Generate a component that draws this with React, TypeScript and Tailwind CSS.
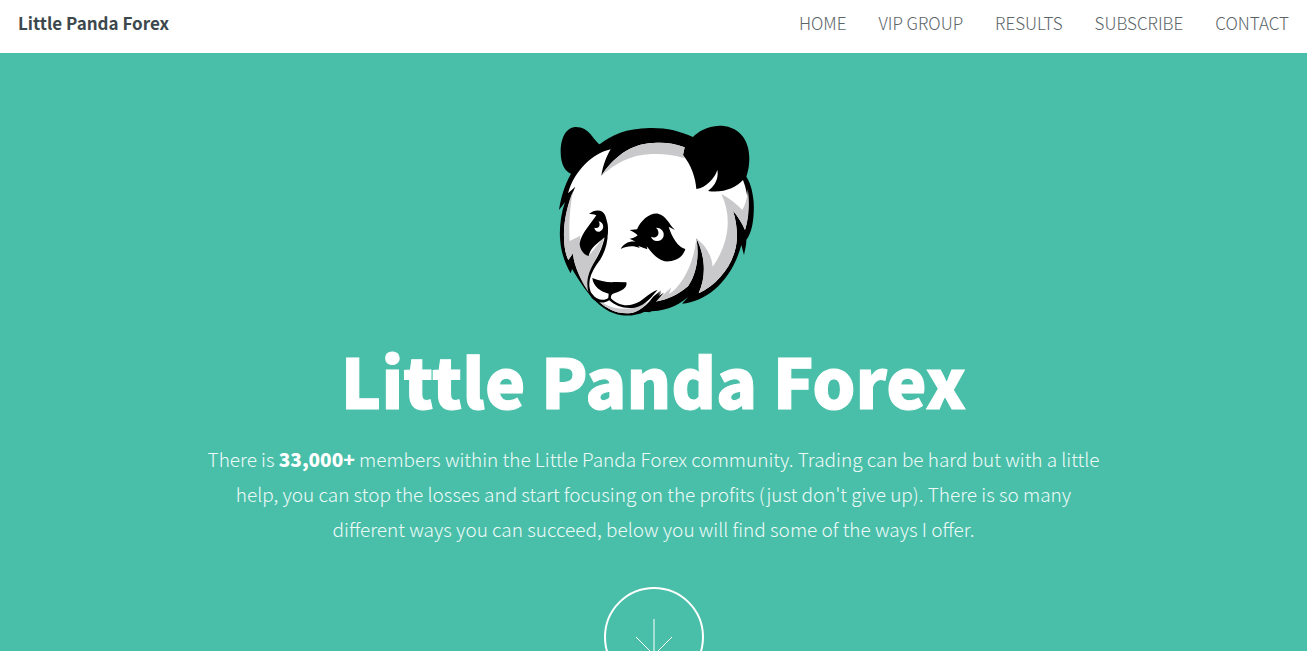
const navLinks = [
  { label: 'HOME', href: '#home' },
  { label: 'VIP GROUP', href: '#vip' },
  { label: 'RESULTS', href: '#results' },
  { label: 'SUBSCRIBE', href: '#subscribe' },
  { label: 'CONTACT', href: '#contact' },
];

function PandaLogo() {
  return (
    <svg viewBox="10 30 606 576" className="w-[202px] h-48 shrink-0" role="img" aria-label="Panda">
      {/* Head silhouette with ears */}
      <path
        fill="#000"
        d="M150 88C130 75 120 36 78 36C45 38 33 75 33 110C33 150 48 170 64 176C45 210 34 245 28 285L46 262C32 300 28 350 32 380C35 415 48 450 63 475L67 462C90 500 115 540 150 570C195 608 245 608 285 590C345 590 380 575 415 547L397 566C470 560 545 500 575 390L583 420C587 400 590 390 590 375C610 350 614 300 612 260C608 220 600 200 590 185C602 150 605 100 580 65C560 38 530 32 510 32C470 34 445 50 430 66C390 48 350 38 300 39C230 40 185 60 150 88Z"
      />
      {/* Face */}
      <path
        fill="#fff"
        d="M183 103C130 115 75 165 55 235L77 215C56 260 44 310 43 350C42 385 46 415 56 435L70 415C72 450 95 505 130 540C160 580 205 600 245 594C275 588 300 560 335 530L318 560C350 555 385 540 415 514C442 475 449 420 440 370C465 420 472 480 447 535C510 505 560 440 562 365C562 340 558 310 550 287C565 305 578 325 586 345C600 300 598 240 580 195C560 218 520 235 475 228C495 215 508 190 503 165C495 190 470 218 440 222C438 190 425 150 400 120L405 97C370 83 340 82 310 84C240 86 190 130 155 182C160 150 170 125 183 103Z"
      />
      {/* Shading */}
      <g fill="#c9c8ca">
        <path d="M155 182C190 130 240 86 310 84C340 82 370 83 405 97L400 120L405 130C370 118 340 116 305 117C240 119 195 148 155 182Z" />
        <path d="M515 237C540 250 562 268 578 285C590 265 594 240 594 222C602 270 596 315 586 345C578 325 565 305 550 287C558 310 562 340 562 365C560 440 510 505 447 535C472 480 465 420 440 370C468 392 486 420 489 455C535 390 550 310 515 237Z" />
        <path d="M440 370C449 420 442 475 415 514C385 540 350 555 318 560L365 517L358 537C395 515 432 450 440 370Z" />
        <path d="M70 228C58 290 58 345 60 378L92 362L90 385L117 423L163 366C155 415 118 455 112 500C112 518 116 530 124 540C95 505 72 450 70 415L56 435C46 415 42 385 43 350C44 310 56 260 70 228Z" />
        <path d="M130 540C180 590 238 592 295 560C280 580 262 591 245 594C205 600 160 580 130 540Z" />
      </g>
      {/* Left eye */}
      <path
        fill="#000"
        d="M118 297C137 281 160 284 167 302C180 340 176 370 163 368C148 382 122 396 117 423C100 420 90 400 90 385C95 355 125 325 140 301C132 297 125 297 118 297Z"
      />
      <path fill="#fff" d="M147 319C165 323 165 346 149 350C140 351 135 345 134 338C147 343 154 332 147 319Z" />
      {/* Right eye */}
      <path
        fill="#000"
        d="M240 345L262 343C275 315 300 293 325 296C350 301 358 328 376 345L357 335C366 365 385 397 407 402C400 428 375 441 345 439C318 430 305 411 291 394L293 403L266 393L270 399C250 390 230 394 213 402C222 385 240 377 258 380L240 371C250 370 258 366 264 361C258 354 250 350 240 345Z"
      />
      <path fill="#fff" d="M319 338C347 337 351 375 324 378C313 379 307 373 304 365C323 374 335 353 319 338Z" />
      {/* Muzzle */}
      <path
        fill="#000"
        d="M128 489C150 499 178 503 197 501L230 502C234 516 218 528 196 534C184 538 183 543 184 550C202 570 230 575 250 568C282 558 290 538 324 524C308 542 290 570 255 578C225 583 198 573 179 556C160 568 140 563 127 550C104 520 110 480 136 438C156 405 168 370 172 320C180 375 168 415 140 450C120 480 112 510 126 536C140 555 164 559 176 548L177 536C155 531 130 515 128 489Z"
      />
      <path fill="#000" d="M268 588C290 574 302 556 312 544L335 526L318 548L343 533L318 561L352 554L300 592Z" />
    </svg>
  );
}

function Header() {
  return (
    <header className="flex shrink-0 items-center justify-between bg-white px-[18px] pt-[9px] pb-[17px] leading-[27px]">
      <a href="#home" className="text-[17px] font-bold text-[#3c484d]">
        Little Panda Forex
      </a>
      <nav className="flex gap-8 text-[17px] font-light text-[#5b6468]">
        {navLinks.map((link) => (
          <a key={link.href} href={link.href}>
            {link.label}
          </a>
        ))}
      </nav>
    </header>
  );
}

export default function App() {
  return (
    <div className="flex min-h-screen flex-col font-['Noto_Sans_CJK_SC','Open_Sans',sans-serif]">
      <Header />
      <main className="flex flex-1 flex-col items-center bg-[#49bfa9] px-6 pt-[72px] pb-16 text-center text-white">
        <PandaLogo />
        <h1 className="mt-[18px] text-[68px] leading-[90px] font-black [-webkit-text-stroke:1px_white]">
          Little Panda Forex
        </h1>
        <p className="mt-4 max-w-[910px] text-[19px] leading-[35px] font-light text-[#eefaf8]">
          There is <b className="font-black text-white">33,000+</b> members within the Little Panda Forex community.
          Trading can be hard but with a little help, you can stop the losses and start focusing on the profits (just
          don't give up). There is so many different ways you can succeed, below you will find some of the ways I offer.
        </p>
        <a
          href="#vip"
          aria-label="Scroll down"
          className="mt-[41px] flex size-[100px] shrink-0 items-center justify-center rounded-full border-2 border-white"
        >
          <svg viewBox="0 0 40 40" className="size-10" fill="none" stroke="currentColor">
            <path d="M20 2V38M2 20L20 38L38 20" />
          </svg>
        </a>
      </main>
    </div>
  );
}
